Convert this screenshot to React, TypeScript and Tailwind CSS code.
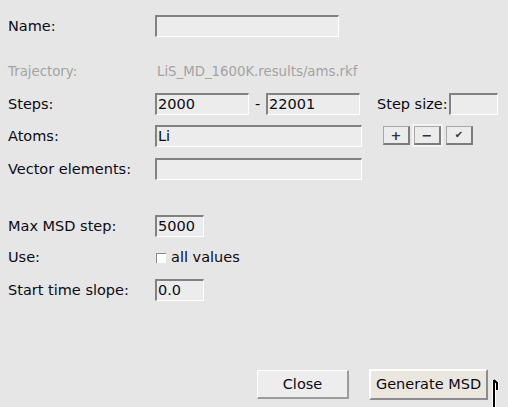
import React from "react";

const entry =
  "h-[22px] bg-[#ececec] border-t-2 border-l-2 border-r border-b border-t-[#828282] border-l-[#828282] border-r-white border-b-white flex items-center pl-[1px] leading-none";

function Entry({ w, value }: { w: string; value?: string }) {
  return <div className={`${entry} ${w}`}>{value}</div>;
}

function SmallBtn({ children, focus }: { children: React.ReactNode; focus?: boolean }) {
  return (
    <div
      className={`w-[27px] h-[19px] bg-[#ececec] border-t border-l border-r-2 border-b-2 border-t-[#a8a8a8] border-l-[#a8a8a8] border-r-[#7c7c7c] border-b-[#7c7c7c] flex items-center justify-center text-[13px] font-bold leading-none text-[#333] ${
        focus ? "shadow-[0_0_0_2px_#f3f3f3]" : ""
      }`}
    >
      {children}
    </div>
  );
}

export default function App() {
  return (
    <div className="w-[508px] h-[407px] bg-[#e6e6e6] relative overflow-hidden font-['DejaVu_Sans',sans-serif] text-[14.5px] text-[#0a0a14] pt-[15px] pl-2 leading-none">
      {/* Name */}
      <div className="flex items-center h-[22px]">
        <div className="w-[147px]">Name:</div>
        <Entry w="w-[184px]" />
      </div>

      {/* Trajectory */}
      <div className="flex items-center h-[22px] mt-[24px] text-[#a3a3a3] text-[13.3px]">
        <div className="w-[149px]">Trajectory:</div>
        <div>LiS_MD_1600K.results/ams.rkf</div>
      </div>

      {/* Steps */}
      <div className="flex items-center h-[22px] mt-[10px]">
        <div className="w-[147px]">Steps:</div>
        <Entry w="w-[94px]" value="2000" />
        <div className="w-[17px] text-center">-</div>
        <Entry w="w-[94px]" value="22001" />
        <div className="w-[72px] ml-[17px]">Step size:</div>
        <Entry w="w-[49px]" />
      </div>

      {/* Atoms */}
      <div className="flex items-center h-[22px] mt-[10px]">
        <div className="w-[147px]">Atoms:</div>
        <Entry w="w-[207px]" value="Li" />
        <div className="flex items-center ml-[21px] gap-[4px] mt-[-1px]">
          <SmallBtn>+</SmallBtn>
          <SmallBtn focus>−</SmallBtn>
          <div className="ml-[1px]">
            <SmallBtn>
              <span className="text-[10px]">✔</span>
            </SmallBtn>
          </div>
        </div>
      </div>

      {/* Vector elements */}
      <div className="flex items-center h-[22px] mt-[11px]">
        <div className="w-[147px]">Vector elements:</div>
        <Entry w="w-[207px]" />
      </div>

      {/* Max MSD step */}
      <div className="flex items-center h-[22px] mt-[35px]">
        <div className="w-[147px]">Max MSD step:</div>
        <Entry w="w-[49px]" value="5000" />
      </div>

      {/* Use */}
      <div className="flex items-center h-[22px] mt-[9px]">
        <div className="w-[147px]">Use:</div>
        <div className="w-[10px] h-[10px] ml-[1px] bg-white border-t border-l border-[#8a8a8a] border-r-0 border-b-0 mt-[2px]" />
        <div className="ml-[5px]">all values</div>
      </div>

      {/* Start time slope */}
      <div className="flex items-center h-[22px] mt-[11px]">
        <div className="w-[147px]">Start time slope:</div>
        <Entry w="w-[49px]" value="0.0" />
      </div>

      {/* Bottom buttons */}
      <div className="flex items-start mt-[68px] ml-[249px]">
        <div className="w-[92px] h-[29px] mt-[1px] bg-[#ededed] border-t border-l border-r-2 border-b-2 border-t-white border-l-white border-r-[#9c9c9c] border-b-[#9c9c9c] flex items-center justify-center">
          Close
        </div>
        <div className="w-[119px] h-[31px] ml-[20px] bg-[#ece7de] border-t-2 border-l-2 border-r-2 border-b-2 border-t-white border-l-white border-r-[#8c8c8c] border-b-[#8c8c8c] flex items-center justify-center">
          Generate MSD
        </div>
      </div>

      {/* mouse cursor */}
      <svg
        className="absolute left-[491px] top-[376px]"
        width="10"
        height="31"
        viewBox="0 0 10 31"
      >
        <path
          d="M3 4 L3 31 M3 4 L6 7 L6 14"
          stroke="white"
          strokeWidth="4"
          fill="none"
          strokeLinejoin="miter"
        />
        <path
          d="M3 4 L3 31 M3 4 L6 7 L6 14"
          stroke="black"
          strokeWidth="2"
          fill="none"
          strokeLinejoin="miter"
        />
      </svg>
    </div>
  );
}
